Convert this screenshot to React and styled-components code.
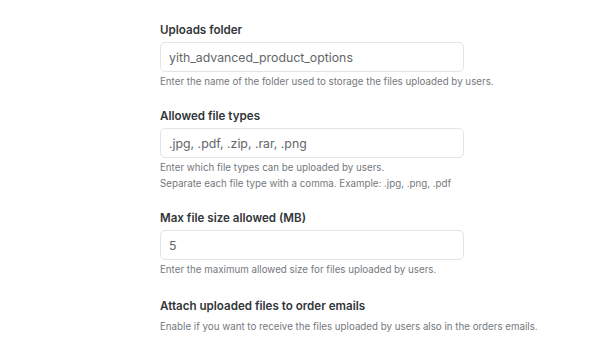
import React from 'react'
import styled, { createGlobalStyle } from 'styled-components'

const GlobalStyle = createGlobalStyle`
  html, body {
    margin: 0;
    padding: 0;
    background: #ffffff;
  }
  body {
    font-family: Inter, "Noto Sans", "Liberation Sans", sans-serif;
  }
`

const Page = styled.div`
  width: 607px;
  height: 355px;
  overflow: hidden;
  box-sizing: border-box;
  padding: 22px 0 0 160px;
  display: flex;
  flex-direction: column;
  gap: 18px;
`

const Field = styled.div`
  display: flex;
  flex-direction: column;
  margin-top: ${p => (p.$bare ? '2px' : '0')};
`

const Label = styled.div`
  font-size: 11.6px;
  line-height: 16px;
  font-weight: 600;
  color: #32363a;
  margin-bottom: ${p => (p.$bare ? '5px' : '4px')};
`

const Input = styled.div`
  box-sizing: border-box;
  width: 304px;
  height: 30px;
  border: 1px solid #e1e4e8;
  border-radius: 5px;
  background: #fff;
  padding: 0 8px;
  display: flex;
  align-items: center;
  font-size: 12.3px;
  color: #62666a;
`

const Help = styled.div`
  margin-top: ${p => (p.$bare ? '0' : '2px')};
  font-size: 9.75px;
  line-height: 16px;
  color: #74787c;
`

const fields = [
  {
    label: 'Uploads folder',
    value: 'yith_advanced_product_options',
    help: ['Enter the name of the folder used to storage the files uploaded by users.']
  },
  {
    label: 'Allowed file types',
    value: '.jpg, .pdf, .zip, .rar, .png',
    help: [
      'Enter which file types can be uploaded by users.',
      'Separate each file type with a comma. Example: .jpg, .png, .pdf'
    ]
  },
  {
    label: 'Max file size allowed (MB)',
    value: '5',
    help: ['Enter the maximum allowed size for files uploaded by users.']
  },
  {
    label: 'Attach uploaded files to order emails',
    help: ['Enable if you want to receive the files uploaded by users also in the orders emails.']
  }
]

export default function App() {
  return (
    <>
      <GlobalStyle />
      <Page>
        {fields.map(f => {
          const bare = f.value === undefined
          return (
            <Field key={f.label} $bare={bare}>
              <Label $bare={bare}>{f.label}</Label>
              {!bare && <Input>{f.value}</Input>}
              <Help $bare={bare}>
                {f.help.map(line => <div key={line}>{line}</div>)}
              </Help>
            </Field>
          )
        })}
      </Page>
    </>
  )
}
